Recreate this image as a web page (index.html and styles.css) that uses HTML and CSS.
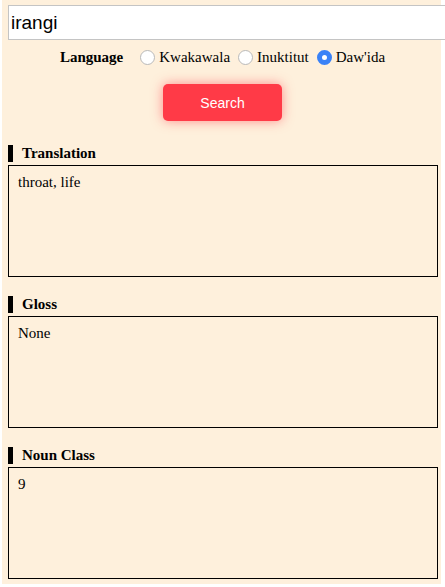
FILE: index.html
```html
<!DOCTYPE html>
<html>
<head>
<meta charset="utf-8">
<link rel="stylesheet" href="styles.css">
</head>
<body>
<div class="page">
  <input class="query" type="text" value="irangi">
  <div class="lang-row">
    <span class="lang-label">Language</span>
    <label class="opt"><span class="radio"></span>Kwakawala</label>
    <label class="opt"><span class="radio"></span>Inuktitut</label>
    <label class="opt"><span class="radio checked"></span>Daw'ida</label>
  </div>
  <div class="btn-row">
    <button class="search">Search</button>
  </div>
  <div class="sections">
    <div class="section">
      <div class="heading">Translation</div>
      <div class="box">throat, life</div>
    </div>
    <div class="section">
      <div class="heading">Gloss</div>
      <div class="box">None</div>
    </div>
    <div class="section">
      <div class="heading">Noun Class</div>
      <div class="box">9</div>
    </div>
  </div>
</div>
</body>
</html>
```

FILE: styles.css
```css
html, body {
  margin: 0;
  padding: 0;
  background: #ffffff;
  overflow: hidden;
}
.page {
  margin: 0 4px 3px 2px;
  padding: 5px 4px 5px 6px;
  background: #fef0dc;
  font-family: "Liberation Serif", "Times New Roman", serif;
  font-size: 15px;
  color: #000;
}
.query {
  display: block;
  box-sizing: border-box;
  width: 440px;
  height: 35px;
  margin: 0;
  padding: 0 0 0 2px;
  border: 1px solid #c4c4c4;
  background: #fff;
  font-family: "Liberation Sans", Arial, sans-serif;
  font-size: 19px;
  color: #000;
  outline: none;
}
.lang-row {
  display: flex;
  justify-content: center;
  align-items: center;
  height: 20px;
  margin-top: 7px;
  line-height: 20px;
}
.lang-label {
  font-weight: bold;
  margin-right: 17px;
}
.opt {
  display: flex;
  align-items: center;
  margin-right: 8px;
}
.opt:last-child {
  margin-right: 0;
}
.radio {
  box-sizing: border-box;
  width: 15px;
  height: 15px;
  border-radius: 50%;
  border: 1px solid #b9b9b9;
  background: #fff;
  margin-right: 4px;
}
.radio.checked {
  border: 5px solid #3a82f7;
  background: #fff;
}
.btn-row {
  display: flex;
  justify-content: center;
  margin-top: 17px;
}
.search {
  width: 119px;
  height: 37px;
  border: none;
  border-radius: 5px;
  background: #ff3a47;
  color: #fff;
  font-family: "Liberation Sans", Arial, sans-serif;
  font-size: 14px;
  box-shadow: 0 0 12px rgba(255, 58, 71, 0.55);
  padding: 0;
}
.sections {
  display: flex;
  flex-direction: column;
  gap: 19px;
  margin-top: 24px;
}
.heading {
  border-left: 5px solid #000;
  padding-left: 9px;
  font-weight: bold;
  line-height: 17px;
  height: 17px;
  margin-bottom: 3px;
}
.box {
  box-sizing: border-box;
  width: 430px;
  height: 112px;
  border: 1px solid #000;
  padding: 8px 9px;
  line-height: 17px;
}
```
